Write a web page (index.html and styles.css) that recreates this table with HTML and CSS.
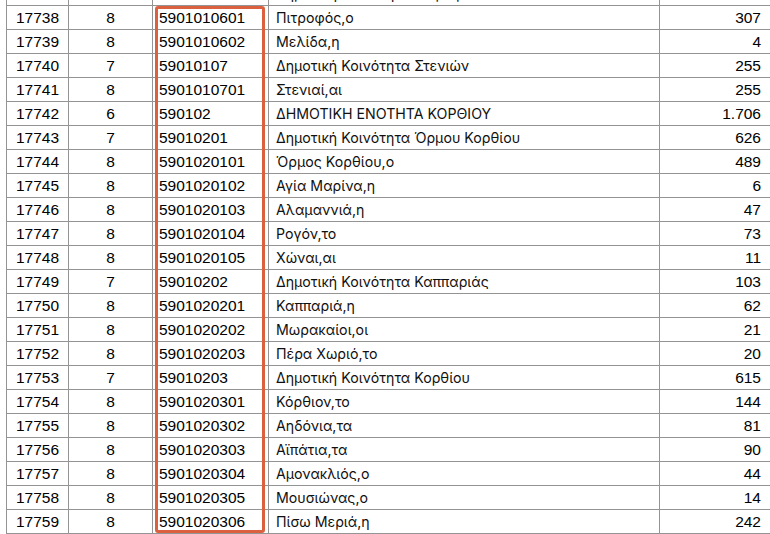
FILE: index.html
```html
<!DOCTYPE html>
<html lang="el">
<head>
<meta charset="utf-8">
<title>Sheet</title>
<link rel="stylesheet" href="styles.css">
</head>
<body>
<div class="sheet">
<table class="grid">
<tbody>
<tr><td class="c1">17737</td><td class="c2">7</td><td class="c3">59010106</td><td class="c4">Δημοτική Κοινότητα Πιτροφού</td><td class="c5">311</td></tr>
<tr><td class="c1">17738</td><td class="c2">8</td><td class="c3">5901010601</td><td class="c4">Πιτροφός,ο</td><td class="c5">307</td></tr>
<tr><td class="c1">17739</td><td class="c2">8</td><td class="c3">5901010602</td><td class="c4">Μελίδα,η</td><td class="c5">4</td></tr>
<tr><td class="c1">17740</td><td class="c2">7</td><td class="c3">59010107</td><td class="c4">Δημοτική Κοινότητα Στενιών</td><td class="c5">255</td></tr>
<tr><td class="c1">17741</td><td class="c2">8</td><td class="c3">5901010701</td><td class="c4">Στενιαί,αι</td><td class="c5">255</td></tr>
<tr><td class="c1">17742</td><td class="c2">6</td><td class="c3">590102</td><td class="c4">ΔΗΜΟΤΙΚΗ ΕΝΟΤΗΤΑ ΚΟΡΘΙΟΥ</td><td class="c5">1.706</td></tr>
<tr><td class="c1">17743</td><td class="c2">7</td><td class="c3">59010201</td><td class="c4">Δημοτική Κοινότητα Όρμου Κορθίου</td><td class="c5">626</td></tr>
<tr><td class="c1">17744</td><td class="c2">8</td><td class="c3">5901020101</td><td class="c4">Όρμος Κορθίου,ο</td><td class="c5">489</td></tr>
<tr><td class="c1">17745</td><td class="c2">8</td><td class="c3">5901020102</td><td class="c4">Αγία Μαρίνα,η</td><td class="c5">6</td></tr>
<tr><td class="c1">17746</td><td class="c2">8</td><td class="c3">5901020103</td><td class="c4">Αλαμαννιά,η</td><td class="c5">47</td></tr>
<tr><td class="c1">17747</td><td class="c2">8</td><td class="c3">5901020104</td><td class="c4">Ρογόν,το</td><td class="c5">73</td></tr>
<tr><td class="c1">17748</td><td class="c2">8</td><td class="c3">5901020105</td><td class="c4">Χώναι,αι</td><td class="c5">11</td></tr>
<tr><td class="c1">17749</td><td class="c2">7</td><td class="c3">59010202</td><td class="c4">Δημοτική Κοινότητα Καππαριάς</td><td class="c5">103</td></tr>
<tr><td class="c1">17750</td><td class="c2">8</td><td class="c3">5901020201</td><td class="c4">Καππαριά,η</td><td class="c5">62</td></tr>
<tr><td class="c1">17751</td><td class="c2">8</td><td class="c3">5901020202</td><td class="c4">Μωρακαίοι,οι</td><td class="c5">21</td></tr>
<tr><td class="c1">17752</td><td class="c2">8</td><td class="c3">5901020203</td><td class="c4">Πέρα Χωριό,το</td><td class="c5">20</td></tr>
<tr><td class="c1">17753</td><td class="c2">7</td><td class="c3">59010203</td><td class="c4">Δημοτική Κοινότητα Κορθίου</td><td class="c5">615</td></tr>
<tr><td class="c1">17754</td><td class="c2">8</td><td class="c3">5901020301</td><td class="c4">Κόρθιον,το</td><td class="c5">144</td></tr>
<tr><td class="c1">17755</td><td class="c2">8</td><td class="c3">5901020302</td><td class="c4">Αηδόνια,τα</td><td class="c5">81</td></tr>
<tr><td class="c1">17756</td><td class="c2">8</td><td class="c3">5901020303</td><td class="c4">Αϊπάτια,τα</td><td class="c5">90</td></tr>
<tr><td class="c1">17757</td><td class="c2">8</td><td class="c3">5901020304</td><td class="c4">Αμονακλιός,ο</td><td class="c5">44</td></tr>
<tr><td class="c1">17758</td><td class="c2">8</td><td class="c3">5901020305</td><td class="c4">Μουσιώνας,ο</td><td class="c5">14</td></tr>
<tr><td class="c1">17759</td><td class="c2">8</td><td class="c3">5901020306</td><td class="c4">Πίσω Μεριά,η</td><td class="c5">242</td></tr>
</tbody>
</table>
<div class="highlight"></div>
</div>
</body>
</html>
```

FILE: styles.css
```css
html, body {
  margin: 0;
  padding: 0;
  background: #ffffff;
  overflow: hidden;
}

.sheet {
  position: relative;
  width: 770px;
  height: 534px;
  overflow: hidden;
}

.grid {
  margin-top: -18px;
  margin-left: 6px;
  border-collapse: separate;
  border-spacing: 0;
  table-layout: fixed;
  width: 764px;
  font-family: "Liberation Sans", Arial, sans-serif;
  font-size: 15.5px;
  color: #000;
}

.grid td {
  box-sizing: border-box;
  height: 24px;
  padding: 0;
  border-bottom: 1px solid #949494;
  border-right: 1px solid #949494;
  white-space: nowrap;
  overflow: hidden;
  vertical-align: middle;
  line-height: 22px;
}

.grid .c1 {
  width: 63px;
  border-left: 1px solid #949494;
  text-align: center;
}

.grid .c2 {
  width: 84px;
  text-align: center;
}

.grid .c3 {
  width: 116px;
  padding-left: 6px;
}

.grid .c4 {
  width: 391px;
  padding-left: 7px;
  font-family: Inter, "Noto Sans", sans-serif;
  font-size: 14.2px;
  color: #111;
}

.grid .c5 {
  width: 110px;
  border-right: none;
  text-align: right;
  padding-right: 9px;
}

.highlight {
  position: absolute;
  left: 155px;
  top: 6px;
  width: 110px;
  height: 527px;
  box-sizing: border-box;
  border: 3px solid #db6040;
  border-radius: 3px;
}
```
